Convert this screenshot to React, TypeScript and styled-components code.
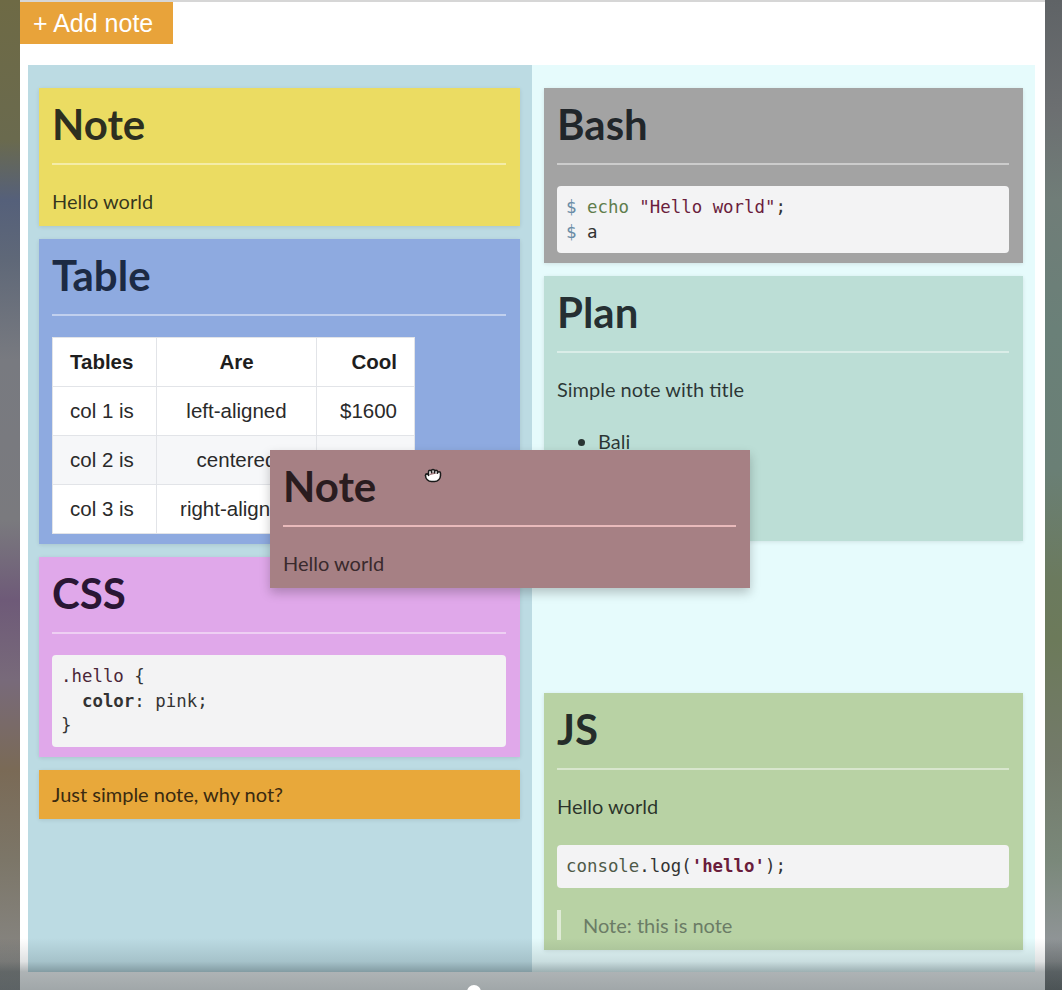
import React from "react";
import styled, { createGlobalStyle } from "styled-components";
import { Grab } from "lucide-react";

const GlobalStyle = createGlobalStyle`
  html, body { margin: 0; padding: 0; }
  body {
    width: 1062px;
    height: 990px;
    overflow: hidden;
    font-family: Lato, "Noto Sans", sans-serif;
    color: #222;
  }
  * { box-sizing: border-box; }
`;

const Screen = styled.div`
  position: relative;
  display: flex;
  width: 1062px;
  height: 990px;
  overflow: hidden;
`;

const LeftWall = styled.div`
  width: 20px;
  flex: none;
  background: linear-gradient(
    to bottom,
    #6e6a45 0px,
    #6a6a4e 140px,
    #55607a 200px,
    #5f6878 260px,
    #787a80 360px,
    #7a7a7e 520px,
    #6e5a78 600px,
    #786a7a 680px,
    #7a6a56 770px,
    #7c7668 860px,
    #8a8a8a 990px
  );
`;

const RightWall = styled.div`
  width: 17px;
  flex: none;
  background: linear-gradient(
    to bottom,
    #5f6366 0px,
    #6c6f71 110px,
    #707d78 200px,
    #6a8078 330px,
    #6a7f75 470px,
    #6b7a5e 580px,
    #6c7a5a 640px,
    #737a6a 760px,
    #7a887a 860px,
    #8f9496 940px,
    #6e7070 990px
  );
`;

const Page = styled.div`
  flex: 1;
  background: #ffffff;
  border-top: 2px solid #d6d6d6;
  display: flex;
  flex-direction: column;
  align-items: flex-start;
`;

const AddButton = styled.button`
  height: 42px;
  width: 153px;
  border: none;
  margin: 0;
  padding: 0 0 0 13px;
  background: #e8a33a;
  color: #ffffff;
  text-align: left;
  font-family: "Liberation Sans", Arial, sans-serif;
  font-size: 25px;
  line-height: 42px;
`;

const Board = styled.div`
  position: relative;
  display: grid;
  grid-template-columns: 504px 503px;
  margin: 21px 0 0 8px;
  height: 907px;
`;

const Column = styled.div<{ $bg: string; $padLeft: number }>`
  background: ${(p) => p.$bg};
  padding: 23px 12px 0 ${(p) => p.$padLeft}px;
  display: flex;
  flex-direction: column;
  gap: 13px;
`;

const Card = styled.div<{ $bg: string }>`
  background: ${(p) => p.$bg};
  padding: 9px 14px 10px 13px;
  box-shadow: 0 1px 4px rgba(0, 0, 0, 0.1);
`;

const Title = styled.h1<{ $ink?: string }>`
  margin: 2px 0 0;
  font-family: Lato, sans-serif;
  font-weight: 700;
  font-size: 42px;
  line-height: 50px;
  color: ${(p) => p.$ink || "rgba(10, 15, 20, 0.86)"};
`;

const Rule = styled.hr<{ $tone?: string }>`
  border: none;
  border-top: 2px solid ${(p) => p.$tone || "rgba(255, 255, 255, 0.45)"};
  margin: 14px 0 21px;
`;

const Text = styled.p<{ $ink?: string }>`
  margin: 0;
  font-size: 20px;
  line-height: 30px;
  color: ${(p) => p.$ink || "rgba(10, 15, 15, 0.82)"};
`;

const Spacer = styled.div`
  height: 126px;
  flex: none;
`;

const Code = styled.pre<{ $top?: number }>`
  margin: ${(p) => p.$top || 0}px 0 0;
  padding: 9px;
  background: #f3f3f4;
  border-radius: 4px;
  font-family: "DejaVu Sans Mono", "Liberation Mono", monospace;
  font-size: 17.4px;
  line-height: 24.5px;
  color: #333;
  white-space: pre;
`;

const Tok = styled.span<{ $c?: string; $b?: boolean }>`
  color: ${(p) => p.$c || "inherit"};
  font-weight: ${(p) => (p.$b ? 700 : 400)};
`;

const Grid = styled.table`
  border-collapse: collapse;
  table-layout: fixed;
  width: 362px;
  background: #ffffff;
  font-family: "Liberation Sans", Arial, sans-serif;
  font-size: 20.5px;
  color: #222;
`;

const Cell = styled.td<{ $align: string; $head?: boolean }>`
  border: 1px solid #e2e4e8;
  padding: 12px 17px;
  line-height: 24px;
  text-align: ${(p) => p.$align};
  font-weight: ${(p) => (p.$head ? 700 : 400)};
  color: ${(p) => (p.$head ? "#1e1e1e" : "#2a2a2a")};
  white-space: nowrap;
  overflow: hidden;
`;

const Row = styled.tr<{ $alt?: boolean }>`
  background: ${(p) => (p.$alt ? "#f6f7f9" : "#ffffff")};
`;

const List = styled.ul`
  margin: 22px 0 15px;
  padding-left: 41px;
  font-size: 20px;
  line-height: 30px;
  color: rgba(10, 15, 15, 0.82);
`;

const Quote = styled.blockquote`
  margin: 22px 0 0;
  padding-left: 22px;
  border-left: 4px solid rgba(255, 255, 255, 0.55);
  font-size: 20px;
  line-height: 30px;
  color: #6b7c66;
`;

const Dragged = styled.div`
  position: absolute;
  left: 242px;
  top: 385px;
  width: 480px;
  background: #a68084;
  padding: 9px 14px 10px 13px;
  box-shadow: 0 5px 10px rgba(0, 0, 0, 0.22);
  z-index: 5;
`;

const Pointer = styled.div`
  position: absolute;
  left: 396px;
  top: 400px;
  width: 20px;
  height: 20px;
  z-index: 6;
  line-height: 0;
`;

const Shade = styled.div`
  position: absolute;
  left: 0;
  right: 0;
  bottom: 0;
  height: 52px;
  pointer-events: none;
  z-index: 10;
  background: linear-gradient(
    to bottom,
    rgba(30, 45, 50, 0) 0%,
    rgba(30, 45, 50, 0.14) 45%,
    rgba(30, 45, 50, 0.36) 65%,
    rgba(30, 45, 50, 0.42) 100%
  );
`;

const Knob = styled.div`
  position: absolute;
  left: 467px;
  top: 985px;
  width: 14px;
  height: 14px;
  border-radius: 50%;
  background: #ffffff;
  z-index: 11;
`;

const LEFT = "#bcdbe3";
const RIGHT = "#e6fbfc";
const MAROON = "#6a1d3c";

const tableRows = [
  ["col 1 is", "left-aligned", "$1600"],
  ["col 2 is", "centered", "$12"],
  ["col 3 is", "right-aligned", "$1"],
];

export default function App() {
  return (
    <>
      <GlobalStyle />
      <Screen>
        <LeftWall />
        <Page>
          <AddButton>+ Add note</AddButton>
          <Board>
            <Column $bg={LEFT} $padLeft={11}>
              <Card $bg="#ebdc62">
                <Title>Note</Title>
                <Rule />
                <Text>Hello world</Text>
              </Card>
              <Card $bg="#8eaae0">
                <Title $ink="#1c2a44">Table</Title>
                <Rule />
                <Grid>
                  <colgroup>
                    <col style={{ width: 104 }} />
                    <col style={{ width: 160 }} />
                    <col style={{ width: 98 }} />
                  </colgroup>
                  <tbody>
                    <Row>
                      <Cell as="th" $head $align="left">Tables</Cell>
                      <Cell as="th" $head $align="center">Are</Cell>
                      <Cell as="th" $head $align="right">Cool</Cell>
                    </Row>
                    {tableRows.map((r, i) => (
                      <Row key={r[0]} $alt={i === 1}>
                        <Cell $align="left">{r[0]}</Cell>
                        <Cell $align="center">{r[1]}</Cell>
                        <Cell $align="right">{r[2]}</Cell>
                      </Row>
                    ))}
                  </tbody>
                </Grid>
              </Card>
              <Card $bg="#e0a8ea">
                <Title $ink="#2a1634">CSS</Title>
                <Rule />
                <Code>
                  <Tok $c="#4a2638">.hello</Tok> {"{"}
                  {"\n  "}
                  <Tok $b>color</Tok>: pink;
                  {"\n}"}
                </Code>
              </Card>
              <Card $bg="#e8a83a">
                <Text $ink="#3a2a10">Just simple note, why not?</Text>
              </Card>
            </Column>
            <Column $bg={RIGHT} $padLeft={12}>
              <Card $bg="#a3a3a3">
                <Title>Bash</Title>
                <Rule />
                <Code>
                  <Tok $c="#6a8ca6">$</Tok> <Tok $c="#5f7d4c">echo</Tok>{" "}
                  <Tok $c={MAROON}>"Hello world"</Tok>;{"\n"}
                  <Tok $c="#6a8ca6">$</Tok> a
                </Code>
              </Card>
              <Card $bg="#bcded6">
                <Title>Plan</Title>
                <Rule />
                <Text>Simple note with title</Text>
                <List>
                  <li>Bali</li>
                  <li>Lombok</li>
                  <li>Gili</li>
                </List>
              </Card>
              <Spacer />
              <Card $bg="#b8d2a4">
                <Title>JS</Title>
                <Rule />
                <Text>Hello world</Text>
                <Code $top={24}>
                  <Tok $c="#4f5a48">console</Tok>.log(
                  <Tok $c={MAROON} $b>'hello'</Tok>);
                </Code>
                <Quote>Note: this is note</Quote>
              </Card>
            </Column>
            <Dragged>
              <Title $ink="#2a1c1f">Note</Title>
              <Rule $tone="rgba(255, 205, 205, 0.75)" />
              <Text $ink="#3a2a2d">Hello world</Text>
            </Dragged>
            <Pointer>
              <Grab size={18} fill="#ffffff" color="#1a1a1a" strokeWidth={2} />
            </Pointer>
          </Board>
        </Page>
        <RightWall />
        <Shade />
        <Knob />
      </Screen>
    </>
  );
}
